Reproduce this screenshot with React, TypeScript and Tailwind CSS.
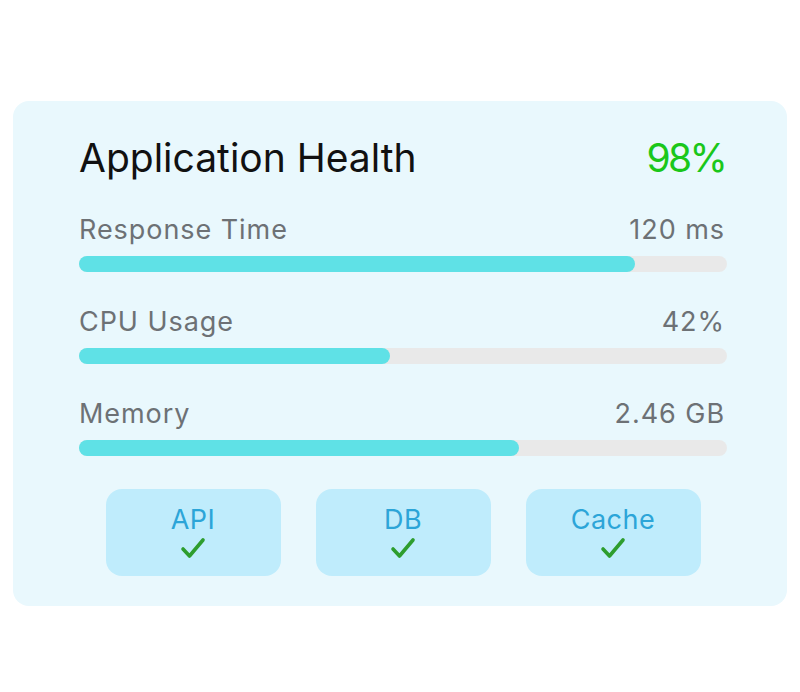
const metrics = [
  { label: "Response Time", value: "120 ms", pct: 85.8 },
  { label: "CPU Usage", value: "42%", pct: 48 },
  { label: "Memory", value: "2.46 GB", pct: 67.9 },
];

const services = ["API", "DB", "Cache"];

function Check() {
  return (
    <svg width="26" height="24" viewBox="0 0 26 24" fill="none" className="mt-[1px]">
      <path
        d="M3 13 L9.5 20 L23 4"
        stroke="#2e9d2e"
        strokeWidth="3.6"
        strokeLinecap="round"
        strokeLinejoin="round"
      />
    </svg>
  );
}

export default function App() {
  return (
    <div
      className="w-[800px] h-[692px] bg-white pt-[101px] pl-[13px]"
      style={{ fontFamily: "Inter, 'Noto Sans', sans-serif" }}
    >
      <div className="w-[774px] h-[505px] rounded-2xl bg-[#e9f8fd] pt-[35px] pl-[66px] pr-[60px]">
        <div className="flex h-[44px] items-center justify-between text-[39px] leading-[44px]">
          <span className="text-[#111111]">Application Health</span>
          <span className="pr-[2px] tracking-[-0.07em] text-[#1ac71a]">98%</span>
        </div>

        <div className="mt-[34px] flex flex-col gap-[34px]">
          {metrics.map((m) => (
            <div key={m.label}>
              <div className="flex h-[32px] justify-between text-[27px] leading-[32px] tracking-[0.035em] text-[#6d7175]">
                <span>{m.label}</span>
                <span className="pr-[2px]">{m.value}</span>
              </div>
              <div className="mt-[10px] h-4 w-full rounded-full bg-[#e9e9e9]">
                <div
                  className="h-4 rounded-full bg-[#5fe1e6]"
                  style={{ width: `${m.pct}%` }}
                />
              </div>
            </div>
          ))}
        </div>

        <div className="mt-[33px] flex justify-center gap-[35px]">
          {services.map((s) => (
            <div
              key={s}
              className="flex h-[87px] w-[175px] flex-col items-center rounded-2xl bg-[#bfecfc] pt-[16px]"
            >
              <span className="text-[27px] leading-[30px] tracking-[0.02em] text-[#2ca5d8]">{s}</span>
              <Check />
            </div>
          ))}
        </div>
      </div>
    </div>
  );
}
